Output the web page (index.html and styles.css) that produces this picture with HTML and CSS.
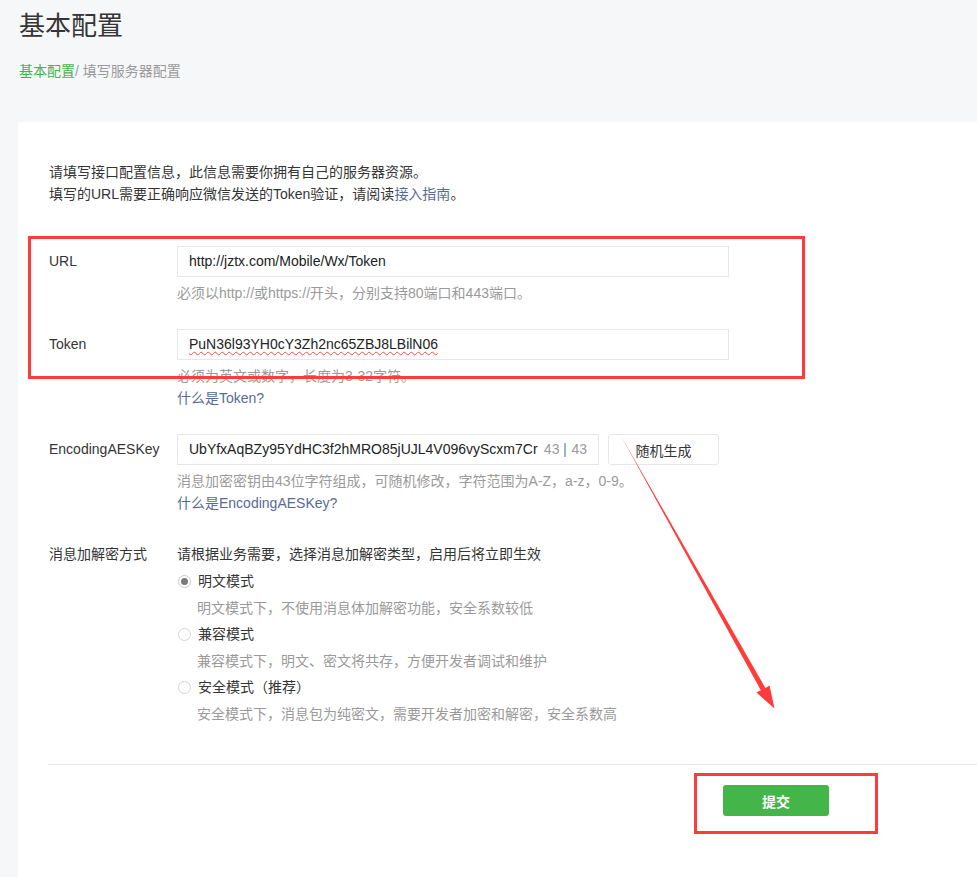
FILE: index.html
```html
<!DOCTYPE html>
<html lang="zh-CN">
<head>
<meta charset="utf-8">
<title>基本配置</title>
<link rel="stylesheet" href="styles.css">
</head>
<body>
<div class="page">
  <header class="head">
    <h1 class="title">基本配置</h1>
    <div class="crumb"><a class="crumb-link">基本配置</a><span class="crumb-cur">/ 填写服务器配置</span></div>
  </header>

  <main class="card">
    <div class="intro">
      <p>请填写接口配置信息，此信息需要你拥有自己的服务器资源。</p>
      <p>填写的URL需要正确响应微信发送的Token验证，请阅读<a class="link">接入指南</a>。</p>
    </div>

    <div class="row row-url">
      <div class="label">URL</div>
      <div class="field">
        <div class="input wide"><span class="val">http://jztx.com/Mobile/Wx/Token</span></div>
        <p class="hint">必须以http://或https://开头，分别支持80端口和443端口。</p>
      </div>
    </div>

    <div class="row">
      <div class="label">Token</div>
      <div class="field">
        <div class="input wide"><span class="val spell">PuN36l93YH0cY3Zh2nc65ZBJ8LBilN06</span></div>
        <p class="hint">必须为英文或数字，长度为3-32字符。</p>
        <p class="hint"><a class="link">什么是Token?</a></p>
      </div>
    </div>

    <div class="row">
      <div class="label">EncodingAESKey</div>
      <div class="field">
        <div class="inline">
          <div class="input aes"><span class="val clip">UbYfxAqBZy95YdHC3f2hMRO85jUJL4V096vyScxm7Cr</span><span class="count">43<i class="sep"></i>43</span></div>
          <button class="btn-gen" type="button">随机生成</button>
        </div>
        <p class="hint">消息加密密钥由43位字符组成，可随机修改，字符范围为A-Z，a-z，0-9。</p>
        <p class="hint"><a class="link">什么是EncodingAESKey?</a></p>
      </div>
    </div>

    <div class="row row-mode">
      <div class="label plain">消息加解密方式</div>
      <div class="field">
        <p class="desc">请根据业务需要，选择消息加解密类型，启用后将立即生效</p>
        <ul class="options">
          <li><span class="radio checked"></span><span class="opt">明文模式</span></li>
          <li class="opt-desc">明文模式下，不使用消息体加解密功能，安全系数较低</li>
          <li><span class="radio"></span><span class="opt">兼容模式</span></li>
          <li class="opt-desc">兼容模式下，明文、密文将共存，方便开发者调试和维护</li>
          <li><span class="radio"></span><span class="opt">安全模式（推荐）</span></li>
          <li class="opt-desc">安全模式下，消息包为纯密文，需要开发者加密和解密，安全系数高</li>
        </ul>
      </div>
    </div>

    <div class="footer">
      <button class="btn-submit" type="button">提交</button>
    </div>
  </main>

  <div class="mark mark-fields"></div>
  <div class="mark mark-submit"></div>
  <svg class="arrow" width="977" height="877" viewBox="0 0 977 877">
    <polygon points="621,436 765.5,688 769.5,685.5 774.5,708.5 756.5,692.5 760.8,690.2" fill="#ff3b3b"/>
  </svg>
</div>
</body>
</html>
```

FILE: styles.css
```css
* { box-sizing: border-box; }
html, body { margin: 0; padding: 0; overflow: hidden; }
body {
  background: #f6f7f9;
  font-family: "Liberation Sans", "Noto Sans CJK SC", sans-serif;
  font-size: 14px;
  color: #353535;
}
p { margin: 0; }
.page { position: relative; width: 977px; height: 877px; }

.head { padding: 8px 0 0 19px; }
.title {
  margin: 0;
  font-size: 26px;
  line-height: 36px;
  font-weight: 400;
  color: #353535;
}
.crumb { margin-top: 17px; line-height: 20px; font-size: 14px; }
.crumb-link { color: #44b549; }
.crumb-cur { color: #9a9a9a; }

.card {
  margin: 41px 0 0 18px;
  background: #fff;
  padding: 39px 0 60px 0;
  min-height: 760px;
}
.intro { padding-left: 31px; line-height: 22px; }
.link { color: #576b95; }

.row {
  display: grid;
  grid-template-columns: 128px 1fr;
  padding-left: 31px;
  margin-top: 25px;
}
.row-url { margin-top: 41px; }
.row-mode { margin-top: 29px; }
.label { line-height: 31px; color: #353535; }
.label.plain { line-height: 22px; }

.input {
  height: 31px;
  border: 1px solid #e4e8eb;
  background: #fff;
  padding: 0 11px;
  display: flex;
  align-items: center;
  line-height: 29px;
  color: #222;
  font-size: 14px;
}
.input.wide { width: 552px; }
.input.aes { width: 422px; }
.val { white-space: nowrap; }
.val.clip { overflow: hidden; flex: 0 0 349px; }
.spell {
  text-decoration: underline wavy #f05050;
  text-decoration-thickness: 1px;
  text-underline-offset: 2px;
}
.count {
  margin-left: auto;
  color: #9a9a9a;
  display: flex;
  align-items: center;
  gap: 5px;
}
.sep { display: inline-block; width: 2px; height: 14px; background: #9ab4d6; }

.inline { display: flex; gap: 9px; }
.btn-gen {
  width: 111px;
  height: 31px;
  border: 1px solid #e4e8eb;
  border-radius: 3px;
  background: #fff;
  font: inherit;
  color: #353535;
  padding: 0;
}

.hint { line-height: 22px; color: #9a9a9a; }
.field > .input + .hint,
.field > .inline + .hint { margin-top: 5px; }

.desc { line-height: 22px; color: #353535; }
.options { list-style: none; margin: 3px 0 0 0; padding: 0; }
.options li { line-height: 26.5px; height: 26.5px; display: flex; align-items: center; }
.opt { color: #353535; }
.opt-desc { padding-left: 20px; color: #9a9a9a; }
.radio {
  width: 13px;
  height: 13px;
  border-radius: 50%;
  border: 1px solid #d4d4d4;
  background: #fff;
  margin: 0 7px 0 1px;
  display: inline-flex;
  align-items: center;
  justify-content: center;
}
.radio.checked { border-color: #c8c8c8; }
.radio.checked::after {
  content: "";
  width: 7px;
  height: 7px;
  border-radius: 50%;
  background: #7a7a7a;
}

.footer {
  margin: 37px 0 0 30px;
  border-top: 1px solid #e4e8eb;
  padding: 20px 0 0 675px;
}
.btn-submit {
  width: 106px;
  height: 31px;
  border: 0;
  border-radius: 3px;
  background: #44b549;
  color: #fff;
  font: inherit;
  font-weight: 700;
  padding: 0;
}

.mark { position: absolute; border: 3px solid #ff3b3b; pointer-events: none; }
.mark-fields { left: 28px; top: 236px; width: 777px; height: 143px; }
.mark-submit { left: 694px; top: 773px; width: 184px; height: 61px; }
.arrow { position: absolute; left: 0; top: 0; pointer-events: none; }
```
